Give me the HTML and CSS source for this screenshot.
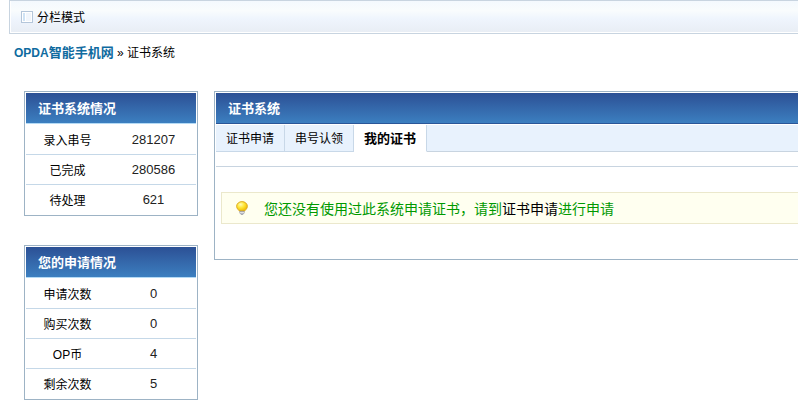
FILE: index.html
```html
<!DOCTYPE html>
<html lang="zh-CN">

<head>
    <meta charset="UTF-8">
    <meta name="viewport" content="width=device-width, initial-scale=1.0">
    <title>证书系统 - OPDA智能手机网</title>
    <link rel="stylesheet" href="styles.css">
</head>

<body>

    <!-- Top Bar -->
    <div class="topbar">
        <a href="#">
            <svg class="frame-icon" width="12" height="12" viewBox="0 0 12 12">
                <rect x="0.5" y="0.5" width="11" height="11" fill="#fff" stroke="#b4c6da" />
                <rect x="2" y="2" width="2" height="8" fill="#cfe3f5" />
                <rect x="5" y="2" width="5" height="8" fill="#f1f6fc" />
            </svg>
            分栏模式
        </a>
    </div>

    <!-- Breadcrumb -->
    <div class="nav"><a href="#"><span class="latin">OPDA</span>智能手机网</a> » 证书系统</div>

    <div class="content">
        <div class="side">
            <div class="box">
                <h4>证书系统情况</h4>
                <table>
                    <tr>
                        <th scope="row">录入串号</th>
                        <td>281207</td>
                    </tr>
                    <tr>
                        <th scope="row">已完成</th>
                        <td>280586</td>
                    </tr>
                    <tr>
                        <th scope="row">待处理</th>
                        <td>621</td>
                    </tr>
                </table>
            </div>

            <div class="box">
                <h4>您的申请情况</h4>
                <table>
                    <tr>
                        <th scope="row">申请次数</th>
                        <td>0</td>
                    </tr>
                    <tr>
                        <th scope="row">购买次数</th>
                        <td>0</td>
                    </tr>
                    <tr>
                        <th scope="row">OP币</th>
                        <td>4</td>
                    </tr>
                    <tr>
                        <th scope="row">剩余次数</th>
                        <td>5</td>
                    </tr>
                </table>
            </div>
        </div>

        <!-- Certificate Panel -->
        <div class="box main">
            <h1>证书系统</h1>
            <div class="tabs">
                <a href="#">证书申请</a>
                <a href="#">串号认领</a>
                <a href="#" class="current">我的证书</a>
            </div>
            <div class="line"></div>
            <div class="notice">
                <svg class="bulb" width="12" height="14" viewBox="0 0 12 14">
                    <defs>
                        <radialGradient id="glow" cx="0.38" cy="0.3" r="0.7">
                            <stop offset="0" stop-color="#fffbb8" />
                            <stop offset="0.45" stop-color="#ffe83c" />
                            <stop offset="1" stop-color="#efb800" />
                        </radialGradient>
                    </defs>
                    <path d="M6 0.6C3 0.6 0.6 2.7 0.6 5.3C0.6 7.6 2.4 8.7 3.6 10.2H8.4C9.6 8.7 11.4 7.6 11.4 5.3C11.4 2.7 9 0.6 6 0.6Z" fill="url(#glow)" stroke="#d9a520" stroke-width="0.9" />
                    <path d="M3.8 10.2H8.2V12L7 13.4H5L3.8 12Z" fill="#b9bbc4" stroke="#8b8c96" stroke-width="0.6" />
                    <path d="M4 11.6H8" stroke="#f3f3f5" stroke-width="0.7" />
                </svg>
                <p>您还没有使用过此系统申请证书，请到<a href="#">证书申请</a>进行申请</p>
            </div>
        </div>
    </div>

</body>

</html>
```

FILE: styles.css
```css
body {
    font: 12px/18px "Liberation Sans", "Noto Sans CJK SC", sans-serif;
    color: #000;
    background: #fff;
    margin: 0;
    overflow-x: hidden;
}

a {
    color: #000;
    text-decoration: none;
}

a:hover {
    text-decoration: underline;
}

/* Top Bar */
.topbar {
    margin-left: 9px;
    padding: 8px 11px 6px;
    border: 1px solid #c8d4e0;
    border-right: none;
    background: linear-gradient(#f4f9fe, #f9fcfd 30%, #eff5fd 55%, #e8edf4);
    box-shadow: inset 1px -1px 0 #fff;
}

.topbar a {
    display: flex;
    align-items: center;
    gap: 4px;
}

.frame-icon {
    margin-bottom: 2px;
}

.nav {
    padding: 10px 14px 0;
}

.nav a {
    color: #0f6b9f;
    font-size: 13px;
    font-weight: bold;
}

.nav .latin {
    font-size: 12px;
}

/* Layout */
.content {
    display: flex;
    align-items: flex-start;
    gap: 16px;
    padding: 29px 0 0 24px;
}

.side {
    flex: 0 0 174px;
}

.box {
    border: 1px solid #9db3c5;
    padding: 1px 1px 0;
}

.side .box {
    margin-bottom: 29px;
}

.side .box:last-child {
    margin-bottom: 0;
}

.box h1,
.box h4 {
    margin: 0 0 1px;
    padding: 2px 0 0 12px;
    font-size: 13px;
    line-height: 28px;
    color: #fff;
    background: linear-gradient(#2c5095, #3c7fc0);
    border-bottom: 1px solid #b4daf5;
}

.box h1 {
    border-bottom-color: #2a5698;
}

table {
    width: 100%;
    table-layout: fixed;
    border-collapse: separate;
    border-spacing: 0;
}

th,
td {
    box-sizing: border-box;
    height: 30px;
    padding: 0;
    text-align: center;
    border-bottom: 1px solid #c5d8e8;
}

th {
    padding: 2px 2px 0 0;
    font-weight: normal;
}

td {
    font-size: 13px;
    color: #222;
}

tr:last-child th,
tr:last-child td {
    border-bottom: none;
}

/* Right panel runs off the window edge */
.main {
    flex: 1;
    min-width: 0;
    margin-right: -20px;
    padding-bottom: 35px;
}

.tabs {
    display: flex;
    background: #e8f2fd;
}

.tabs a {
    padding: 2px 10px 0;
    line-height: 24px;
    border-right: 1px solid #c8d8e8;
    border-bottom: 1px solid #c8d8e8;
}

.tabs::after {
    content: "";
    flex: 1;
    border-bottom: 1px solid #c8d4e0;
}

.tabs .current {
    font-size: 13px;
    font-weight: bold;
    background: #fff;
    border-bottom-color: #fff;
}

.line {
    height: 14px;
    border-bottom: 1px solid #c8d4e0;
}

.notice {
    display: flex;
    align-items: center;
    gap: 16px;
    margin: 25px 5px 0;
    padding-left: 14px;
    background: #fffff0;
    border: 1px solid #ebe8cc;
}

.notice p {
    margin: 0;
    padding-top: 2px;
    font-size: 14px;
    line-height: 28px;
    color: #090;
}
```
